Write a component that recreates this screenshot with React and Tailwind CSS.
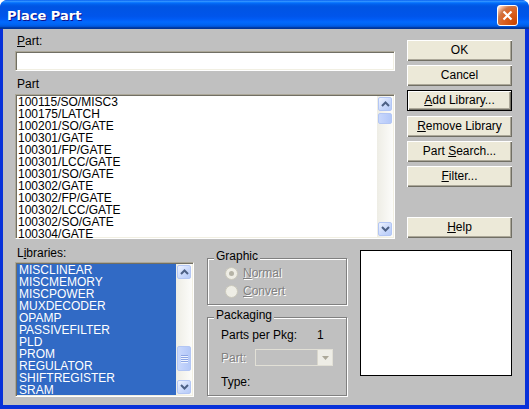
import React from 'react'

const parts = [
  '100115/SO/MISC3', '100175/LATCH', '100201/SO/GATE', '100301/GATE',
  '100301/FP/GATE', '100301/LCC/GATE', '100301/SO/GATE', '100302/GATE',
  '100302/FP/GATE', '100302/LCC/GATE', '100302/SO/GATE', '100304/GATE',
]
const libraries = [
  'MISCLINEAR', 'MISCMEMORY', 'MISCPOWER', 'MUXDECODER', 'OPAMP', 'PASSIVEFILTER',
  'PLD', 'PROM', 'REGULATOR', 'SHIFTREGISTER', 'SRAM',
]

const sunken = 'border border-t-[#aca899] border-l-[#aca899] border-b-white border-r-white p-px shadow-[inset_1px_1px_0_#716f64,inset_-1px_-1px_0_#f1efe2]'
const disabled = 'text-[#808080] [text-shadow:1px_1px_0_#fff]'

function U({ children }) {
  return <span className="underline underline-offset-1">{children}</span>
}

function ScrollBtn({ dir }) {
  return (
    <div className="h-[16px] w-[16px] p-px">
      <div className="flex h-full w-full items-center justify-center rounded-[2px] border border-[#b3c6f4] bg-[linear-gradient(135deg,#eef3fe_0%,#cad9fb_55%,#b6cbf8_100%)]">
        <svg width="9" height="6" viewBox="0 0 9 6">
          <path d={dir === 'up' ? 'M1 5L4.5 1.5L8 5' : 'M1 1L4.5 4.5L8 1'} fill="none" stroke="#4d6185" strokeWidth="2" />
        </svg>
      </div>
    </div>
  )
}

function Thumb({ h, grip }) {
  return (
    <div className="w-[16px] p-px" style={{ height: h }}>
      <div className="flex h-full w-full flex-col items-center justify-center gap-px rounded-[2px] border border-[#b3c6f4] bg-[linear-gradient(to_right,#c9d8fc,#bccefa_60%,#b3c8f8)]">
        {grip && [0, 1, 2, 3].map(i => (
          <div key={i} className="h-px w-[7px] bg-[#8ca5e4] shadow-[0_1px_0_#eef3fe]" />
        ))}
      </div>
    </div>
  )
}

function Btn({ children, focused }) {
  return (
    <div className={`flex h-[21px] w-[105px] items-center justify-center bg-[#ece9d8] pb-px shadow-[inset_1px_1px_0_#fff,inset_-1px_-1px_0_#716f64,inset_-2px_-2px_0_#aca899] ${focused ? 'border border-black' : ''}`}>
      {children}
    </div>
  )
}

function Radio({ checked, children }) {
  return (
    <div className="flex h-[14px] items-center">
      <div className="flex h-[13px] w-[13px] items-center justify-center rounded-full border border-[#cac8bb] bg-[#eeede5]">
        {checked && <div className="h-[5px] w-[5px] rounded-full bg-[#b5b3a6]" />}
      </div>
      <span className={`ml-[5px] ${disabled}`}>{children}</span>
    </div>
  )
}

export default function App() {
  return (
    <div className="flex h-[409px] w-[529px] flex-col rounded-t-[8px] bg-[#0831d9] font-['Liberation_Sans',Arial,sans-serif] text-[12px] leading-[12px] text-black">
      {/* Title bar */}
      <div className="flex h-[29px] justify-between rounded-t-[7px] bg-[linear-gradient(to_bottom,#0058ee_0%,#3593ff_4%,#288eff_6%,#127dff_8%,#036ffc_10%,#0262ee_14%,#0057e5_20%,#0054e3_24%,#0055eb_56%,#005bf5_66%,#026afe_76%,#0062ef_86%,#0052d6_92%,#0040ab_94%,#003092_100%)] pl-[7px] pr-[11px] pt-[5px]">
        <span className="mt-[3px] font-['DejaVu_Sans',sans-serif] text-[13px] font-bold leading-[15px] text-white [text-shadow:1px_1px_0_#0f1089]">
          Place Part
        </span>
        <div className="flex h-[21px] w-[21px] items-center justify-center rounded-[3px] border border-white bg-[radial-gradient(circle_at_90%_90%,#cc4600_0%,#dc6527_55%,#cd7546_70%,#ffccb2_90%,#fff_100%)]">
          <svg width="11" height="11" viewBox="0 0 11 11">
            <path d="M1.5 1.5L9.5 9.5M9.5 1.5L1.5 9.5" stroke="#fff" strokeWidth="2.2" />
          </svg>
        </div>
      </div>

      {/* Body */}
      <div className="ml-[3px] h-[376px] w-[522px] bg-[#c0c0c0] pl-[12px]">
        <div className="flex h-[210px]">
          <div className="flex w-[380px] flex-col pt-[6px]">
            <div className="ml-[2px] h-[12px]"><U>P</U>art:</div>
            <div className={`mt-[4px] h-[20px] bg-white ${sunken}`} />
            <div className="ml-[2px] mt-[7px] h-[12px]">Part</div>
            <div className={`mt-[4px] flex h-[145px] bg-white ${sunken}`}>
              <div className="flex-1 pl-px">
                {parts.map(p => (
                  <div key={p} className="h-[12px] whitespace-nowrap">{p}</div>
                ))}
              </div>
              <div className="flex w-[16px] flex-col bg-[linear-gradient(to_right,#eeede5,#fcfcfa)]">
                <ScrollBtn dir="up" />
                <Thumb h={13} />
                <div className="flex-1" />
                <ScrollBtn dir="down" />
              </div>
            </div>
          </div>

          <div className="ml-[12px] flex flex-col pt-[11px]">
            <Btn>OK</Btn>
            <div className="mt-[4px]"><Btn>Cancel</Btn></div>
            <div className="mt-[4px]"><Btn focused><span><U>A</U>dd Library...</span></Btn></div>
            <div className="mt-[5px]"><Btn><span><U>R</U>emove Library</span></Btn></div>
            <div className="mt-[4px]"><Btn><span>Part <U>S</U>earch...</span></Btn></div>
            <div className="mt-[4px]"><Btn><span><U>F</U>ilter...</span></Btn></div>
            <div className="mt-[30px]"><Btn><span><U>H</U>elp</span></Btn></div>
          </div>
        </div>

        <div className="flex items-start">
          {/* Libraries */}
          <div className="flex w-[179px] flex-col">
            <div className="ml-[2px] mt-[8px] h-[12px]">L<U>i</U>braries:</div>
            <div className={`mt-[3px] flex h-[135px] bg-white ${sunken}`}>
              <div className="flex-1 bg-[#316ac5] pl-[2px] text-white">
                {libraries.map(l => (
                  <div key={l} className="h-[12px] whitespace-nowrap">{l}</div>
                ))}
              </div>
              <div className="flex w-[16px] flex-col bg-[linear-gradient(to_right,#eeede5,#fcfcfa)]">
                <ScrollBtn dir="up" />
                <div className="h-[65px]" />
                <Thumb h={27} grip />
                <div className="flex-1" />
                <ScrollBtn dir="down" />
              </div>
            </div>
          </div>

          {/* Graphic + Packaging */}
          <div className="ml-[13px] mt-[11px] flex w-[140px] flex-col">
            <fieldset className="h-[55px] border border-[#808080] pl-[6px] shadow-[inset_1px_1px_0_#fff,1px_1px_0_#fff]">
              <legend className="bg-[#c0c0c0] px-[2px] pb-[4px] leading-[12px]">Graphic</legend>
              <div className="flex flex-col gap-[4px] pl-[11px]">
                <Radio checked><U>N</U>ormal</Radio>
                <Radio><U>C</U>onvert</Radio>
              </div>
            </fieldset>
            <fieldset className="mt-[4px] h-[87px] border border-[#808080] pl-[6px] shadow-[inset_1px_1px_0_#fff,1px_1px_0_#fff]">
              <legend className="bg-[#c0c0c0] px-[2px] pb-[4px] leading-[12px]">Packaging</legend>
              <div className="flex flex-col pl-[7px] pt-[4px]">
                <div className="flex h-[12px]">
                  <span className="w-[96px]">Parts per Pkg:</span>
                  <span>1</span>
                </div>
                <div className="mt-[8px] flex h-[17px] items-center">
                  <span className={`w-[34px] ${disabled}`}>Part:</span>
                  <div className="flex h-[17px] w-[78px] border border-[#e2e0d6] bg-[#c0c0c0]">
                    <div className="flex-1" />
                    <div className="flex w-[15px] items-center justify-center border-l border-[#d8d6cc] bg-[#eeede6]">
                      <svg width="7" height="4" viewBox="0 0 7 4">
                        <path d="M0 0H7L3.5 4Z" fill="#aca899" />
                      </svg>
                    </div>
                  </div>
                </div>
                <div className="mt-[10px] h-[12px]">Type:</div>
              </div>
            </fieldset>
          </div>

          {/* Preview */}
          <div className="ml-[13px] mt-[11px] h-[126px] w-[152px] border border-black bg-white" />
        </div>
      </div>
    </div>
  )
}
